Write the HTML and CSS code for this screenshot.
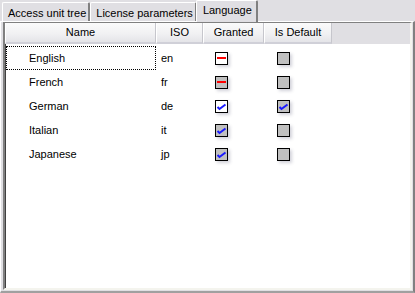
FILE: index.html
```html
<!DOCTYPE html>
<html>
<head>
<meta charset="utf-8">
<link rel="stylesheet" href="styles.css">
</head>
<body>
<div class="tabs">
  <div class="tab">Access unit tree</div>
  <div class="tab">License parameters</div>
  <div class="tab active">Language</div>
</div>
<div class="panel">
  <div class="list">
    <div class="header">
      <div class="hcell c-name">Name</div>
      <div class="hcell c-iso">ISO</div>
      <div class="hcell c-gr">Granted</div>
      <div class="hcell c-def">Is Default</div>
      <div class="hfill"></div>
    </div>
    <div class="rows">
      <div class="row">
        <div class="cell c-name name focus">English</div>
        <div class="cell c-iso iso">en</div>
        <div class="cell c-gr box-cell"><span class="cb white"><span class="dash"></span></span></div>
        <div class="cell c-def box-cell"><span class="cb"></span></div>
      </div>
      <div class="row">
        <div class="cell c-name name">French</div>
        <div class="cell c-iso iso">fr</div>
        <div class="cell c-gr box-cell"><span class="cb"><span class="dash"></span></span></div>
        <div class="cell c-def box-cell"><span class="cb"></span></div>
      </div>
      <div class="row">
        <div class="cell c-name name">German</div>
        <div class="cell c-iso iso">de</div>
        <div class="cell c-gr box-cell"><span class="cb white"><svg class="chk" viewBox="0 0 11 11" width="11" height="11"><path d="M1.5 6 L3.5 8 L9.5 3.5" fill="none" stroke="#1a1aff" stroke-width="2"/></svg></span></div>
        <div class="cell c-def box-cell"><span class="cb"><svg class="chk" viewBox="0 0 11 11" width="11" height="11"><path d="M1.5 6 L3.5 8 L9.5 3.5" fill="none" stroke="#1a1aff" stroke-width="2"/></svg></span></div>
      </div>
      <div class="row">
        <div class="cell c-name name">Italian</div>
        <div class="cell c-iso iso">it</div>
        <div class="cell c-gr box-cell"><span class="cb"><svg class="chk" viewBox="0 0 11 11" width="11" height="11"><path d="M1.5 6 L3.5 8 L9.5 3.5" fill="none" stroke="#1a1aff" stroke-width="2"/></svg></span></div>
        <div class="cell c-def box-cell"><span class="cb"></span></div>
      </div>
      <div class="row">
        <div class="cell c-name name">Japanese</div>
        <div class="cell c-iso iso">jp</div>
        <div class="cell c-gr box-cell"><span class="cb"><svg class="chk" viewBox="0 0 11 11" width="11" height="11"><path d="M1.5 6 L3.5 8 L9.5 3.5" fill="none" stroke="#1a1aff" stroke-width="2"/></svg></span></div>
        <div class="cell c-def box-cell"><span class="cb"></span></div>
      </div>
    </div>
  </div>
</div>
</body>
</html>
```
FILE: styles.css
```css
html, body {
  margin: 0;
  padding: 0;
  width: 415px;
  height: 293px;
  overflow: hidden;
  background: #e0dfe3;
  font-family: "Liberation Sans", Arial, sans-serif;
  font-size: 11px;
  color: #000;
}
.tabs {
  display: flex;
  align-items: flex-end;
  height: 21px;
  padding-left: 2px;
  box-sizing: border-box;
}
.tab {
  height: 19px;
  box-sizing: border-box;
  padding: 3px 2px 0 5px;
  border-left: 1px solid #fff;
  border-top: 1px solid #fff;
  border-right: 2px solid #808080;
  border-radius: 2px 2px 0 0;
  line-height: 14px;
  white-space: nowrap;
}
.tab.active {
  height: 22px;
  margin-bottom: -1px;
  padding: 2px 4px 0 6px;
  margin-left: -1px;
  background: #e0dfe3;
  position: relative;
  z-index: 1;
}
.panel {
  height: 272px;
  box-sizing: border-box;
  border-top: 1px solid #fff;
  border-left: 1px solid #fff;
  border-right: 2px solid #808080;
  border-bottom: 2px solid #a0a0a0;
  padding: 0 1px 1px 2px;
  display: flex;
}
.list {
  flex: 1;
  background: #fff;
  border-left: 2px solid #808080;
  border-top: 1px solid #808080;
  border-right: 2px solid #f4f4ee;
  border-bottom: 2px solid #f4f4ee;
  box-shadow: inset 1px 0 0 #404040;
  display: flex;
  flex-direction: column;
}
.header {
  display: flex;
  height: 21px;
  background: #e0dfe3;
}
.hcell {
  box-sizing: border-box;
  height: 21px;
  line-height: 19px;
  text-align: center;
  background: linear-gradient(#fbfbfb, #f0f0f2 60%, #e4e4e8);
  border-left: 1px solid #fff;
  border-right: 1px solid #c6c6cc;
  border-bottom: 2px solid #d0d0d8;
}
.hfill {
  flex: 1;
  background: #e0dfe3;
}
.c-name { width: 151px; }
.c-iso { width: 47px; }
.c-gr { width: 61px; }
.c-def { width: 68px; }
.rows {
  padding-top: 2px;
}
.row {
  display: flex;
  height: 24px;
  align-items: stretch;
}
.cell {
  box-sizing: border-box;
  display: flex;
  align-items: center;
}
.name {
  padding-left: 23px;
  margin-left: 1px;
  width: 150px;
}
.focus {
  outline: 1px dotted #000;
  outline-offset: -1px;
}
.iso {
  padding-left: 5px;
}
.box-cell {
  padding-left: 12px;
}
.c-def.box-cell {
  padding-left: 13px;
}
.cb {
  width: 13px;
  height: 13px;
  box-sizing: border-box;
  border: 1px solid #000;
  background: #c0c0c0;
  box-shadow: 2px 2px 3px rgba(80, 80, 110, 0.25);
  display: flex;
  align-items: center;
  justify-content: center;
}
.cb.white {
  background: #fff;
}
.dash {
  width: 9px;
  height: 2px;
  background: #ff0000;
}
.chk {
  display: block;
}
```
